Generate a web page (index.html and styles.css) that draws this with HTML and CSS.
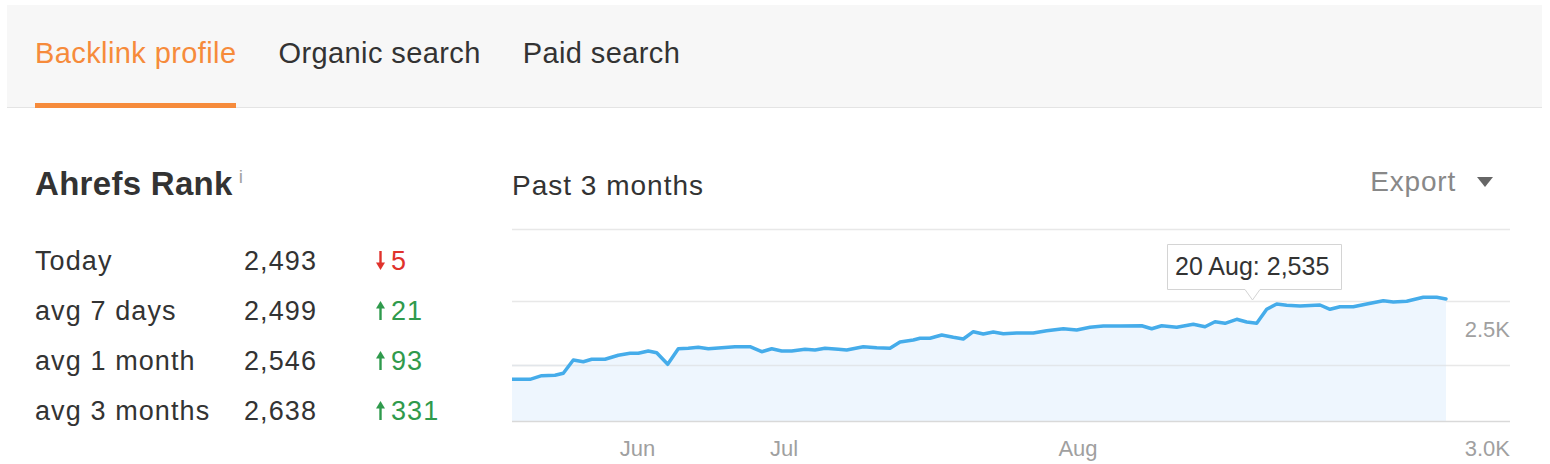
FILE: index.html
```html
<!DOCTYPE html>
<html lang="en">
<head>
<meta charset="utf-8">
<title>Ahrefs Rank</title>
<link rel="stylesheet" href="styles.css">
</head>
<body>
<div class="page">
  <nav class="tabs">
    <a class="tab active">Backlink profile</a>
    <a class="tab">Organic search</a>
    <a class="tab">Paid search</a>
  </nav>
  <main class="content">
    <section class="rank">
      <h2 class="rank-title">Ahrefs Rank<sup class="info">i</sup></h2>
      <div class="rank-table">
        <div class="cell label">Today</div>
        <div class="cell value">2,493</div>
        <div class="cell change down"><svg class="arrow" viewBox="0 0 9 19" width="9" height="19"><path d="M3.3 0h2.4v12h-2.4z"/><path d="M0 11.5h9l-4.5 7.5z"/></svg>5</div>

        <div class="cell label">avg 7 days</div>
        <div class="cell value">2,499</div>
        <div class="cell change up"><svg class="arrow" viewBox="0 0 9 19" width="9" height="19"><path d="M3.3 7h2.4v12h-2.4z"/><path d="M0 7.5h9l-4.5-7.5z"/></svg>21</div>

        <div class="cell label">avg 1 month</div>
        <div class="cell value">2,546</div>
        <div class="cell change up"><svg class="arrow" viewBox="0 0 9 19" width="9" height="19"><path d="M3.3 7h2.4v12h-2.4z"/><path d="M0 7.5h9l-4.5-7.5z"/></svg>93</div>

        <div class="cell label">avg 3 months</div>
        <div class="cell value">2,638</div>
        <div class="cell change up"><svg class="arrow" viewBox="0 0 9 19" width="9" height="19"><path d="M3.3 7h2.4v12h-2.4z"/><path d="M0 7.5h9l-4.5-7.5z"/></svg>331</div>
      </div>
    </section>
    <section class="chart">
      <div class="chart-head">
        <span class="period">Past 3 months</span>
        <span class="export">Export<svg class="caret" viewBox="0 0 16 10" width="16" height="10"><path d="M0 0h16l-8 10z"/></svg></span>
      </div>
      <svg class="chart-svg" viewBox="512 220 1000 244" width="1000" height="244">
        <g class="grid">
          <line x1="512" y1="229.5" x2="1510" y2="229.5"/>
          <line x1="512" y1="301.5" x2="1510" y2="301.5"/>
          <line x1="512" y1="365.5" x2="1510" y2="365.5"/>
        </g>
        <polygon class="area" points="512,379.3 530,379.3 541.7,375.7 555,375.3 563.3,373.3 573.3,360 583.3,361.7 591.7,359.3 605,359.3 618.3,355.3 630,353.3 638.3,353.3 648.3,351 656.7,352.7 667.7,364.3 678.3,348.7 688.3,348.3 698.3,347.3 708.3,348.7 721.7,347.7 735,346.7 750,346.7 761.7,351.7 771.7,348.7 781.7,351 791.7,351 805,349.3 815,350 825,348.3 838.3,349.3 846.7,350 863.3,346.7 876.7,347.7 890,348.3 900,342 913.3,340 920,338.3 930,338.3 941.7,335 953.3,337.3 963.3,339 973.3,331.7 983.3,334 993.3,332 1003.3,333.7 1016.7,333 1033.3,333 1046.7,330.7 1063.3,328.7 1076.7,330 1090,327.3 1103.3,326 1120,326 1141.7,325.7 1151.7,328.7 1161.7,325.7 1176.7,327.3 1193.3,324.3 1205,326.7 1215,321.7 1225,323.3 1236.7,319.3 1246.7,322 1256.7,323.3 1266.7,309.3 1276.7,304 1286.7,305.3 1300,306 1320,305 1330,309.3 1340,306.7 1353.3,306.7 1366.7,304 1383.3,300.7 1393.3,302 1406.7,301.3 1423.3,297.3 1436.7,297.3 1446,299 1446,422 512,422"/>
        <line class="grid-inner" x1="512" y1="365.5" x2="1446" y2="365.5"/>
        <line class="baseline" x1="512" y1="421.5" x2="1510" y2="421.5"/>
        <polyline class="line" points="512,379.3 530,379.3 541.7,375.7 555,375.3 563.3,373.3 573.3,360 583.3,361.7 591.7,359.3 605,359.3 618.3,355.3 630,353.3 638.3,353.3 648.3,351 656.7,352.7 667.7,364.3 678.3,348.7 688.3,348.3 698.3,347.3 708.3,348.7 721.7,347.7 735,346.7 750,346.7 761.7,351.7 771.7,348.7 781.7,351 791.7,351 805,349.3 815,350 825,348.3 838.3,349.3 846.7,350 863.3,346.7 876.7,347.7 890,348.3 900,342 913.3,340 920,338.3 930,338.3 941.7,335 953.3,337.3 963.3,339 973.3,331.7 983.3,334 993.3,332 1003.3,333.7 1016.7,333 1033.3,333 1046.7,330.7 1063.3,328.7 1076.7,330 1090,327.3 1103.3,326 1120,326 1141.7,325.7 1151.7,328.7 1161.7,325.7 1176.7,327.3 1193.3,324.3 1205,326.7 1215,321.7 1225,323.3 1236.7,319.3 1246.7,322 1256.7,323.3 1266.7,309.3 1276.7,304 1286.7,305.3 1300,306 1320,305 1330,309.3 1340,306.7 1353.3,306.7 1366.7,304 1383.3,300.7 1393.3,302 1406.7,301.3 1423.3,297.3 1436.7,297.3 1446,299"/>
        <g class="axis">
          <text x="1510" y="337" text-anchor="end">2.5K</text>
          <text x="1510" y="456" text-anchor="end">3.0K</text>
          <text x="637.5" y="456" text-anchor="middle">Jun</text>
          <text x="784" y="456" text-anchor="middle">Jul</text>
          <text x="1078" y="456" text-anchor="middle">Aug</text>
        </g>
        <g class="tooltip">
          <path class="tip-box" d="M1167.5 244.5H1341.5V289.5H1260L1252.5 300L1245 289.5H1167.5Z"/>
          <text class="tip-text" x="1175" y="275">20 Aug: 2,535</text>
        </g>
      </svg>
    </section>
  </main>
</div>
</body>
</html>
```
FILE: styles.css
```css
html, body {
  margin: 0;
  padding: 0;
  background: #fff;
}

body {
  font-family: "Liberation Sans", Arial, Helvetica, sans-serif;
  color: #333;
  overflow: hidden;
}

.page {
  padding: 5px 8px 0 7px;
}

/* Tabs */
.tabs {
  display: flex;
  height: 102px;
  background: #f7f7f7;
  border-bottom: 1px solid #e4e4e4;
  padding-left: 28px;
  gap: 42px;
}

.tab {
  padding-top: 31px;
  font-size: 29px;
  line-height: 34px;
  letter-spacing: 0.4px;
  color: #333;
  border-bottom: 5px solid transparent;
  margin-bottom: -1px;
  cursor: pointer;
}

.tab.active {
  color: #f68b3b;
  border-bottom-color: #f68b3b;
}

/* Content */
.content {
  display: flex;
  padding-left: 28px;
}

.rank {
  width: 477px;
  flex: none;
}

.rank-title {
  margin: 57px 0 0;
  font-size: 33px;
  line-height: 38px;
  font-weight: bold;
  color: #333;
  letter-spacing: 0.3px;
}

.info {
  font-size: 19px;
  font-weight: normal;
  color: #a3a3a3;
  margin-left: 6px;
  vertical-align: 12px;
  line-height: 0;
}

.rank-table {
  margin-top: 33px;
  display: grid;
  grid-template-columns: 209px 132px auto;
  grid-auto-rows: 50px;
  font-size: 27px;
  line-height: 50px;
  letter-spacing: 1.1px;
}

.cell {
  white-space: nowrap;
}

.label, .value {
  color: #333;
}

.change {
  display: flex;
  align-items: baseline;
  gap: 6px;
}

.change .arrow {
  flex: none;
  fill: currentColor;
  align-self: center;
  position: relative;
  top: -1px;
}

.change.down {
  color: #e0322c;
}

.change.up {
  color: #2f9a4c;
}

/* Chart */
.chart {
  width: 998px;
  flex: none;
}

.chart-head {
  height: 112px;
  display: flex;
  justify-content: space-between;
  align-items: flex-start;
  padding-right: 17px;
  box-sizing: border-box;
}

.period {
  padding-top: 61px;
  font-size: 28px;
  line-height: 34px;
  letter-spacing: 1px;
  color: #333;
}

.export {
  padding-top: 57px;
  font-size: 28px;
  line-height: 34px;
  letter-spacing: 0.8px;
  color: #888;
  display: flex;
  align-items: center;
  gap: 21px;
}

.caret {
  fill: #666;
}

.chart-svg {
  display: block;
}

.grid line {
  stroke: #e8e8e8;
  stroke-width: 1.5;
}

.grid-inner {
  stroke: #e2e6ea;
  stroke-width: 1.5;
}

.baseline {
  stroke: #d9d9d9;
  stroke-width: 1.5;
}

.area {
  fill: #eef6fe;
}

.line {
  fill: none;
  stroke: #45acea;
  stroke-width: 3.5;
  stroke-linejoin: round;
  stroke-linecap: round;
}

.axis text {
  font-family: "Liberation Sans", Arial, sans-serif;
  font-size: 22px;
  fill: #a0a0a0;
}

.tip-box {
  fill: #fff;
  stroke: #d4d4d4;
  stroke-width: 1;
}

.tip-text {
  font-family: "Liberation Sans", Arial, sans-serif;
  font-size: 25px;
  fill: #333;
}
```
